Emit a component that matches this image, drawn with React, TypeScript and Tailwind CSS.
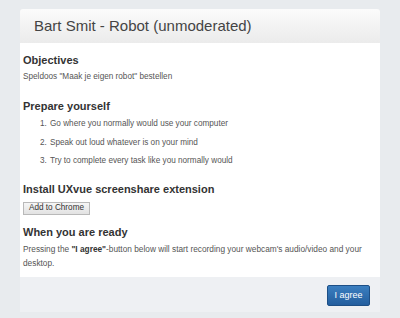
import React from "react";

const steps = [
  "Go where you normally would use your computer",
  "Speak out loud whatever is on your mind",
  "Try to complete every task like you normally would",
];

export default function App() {
  return (
    <div className="h-[318px] w-[400px] overflow-hidden bg-[#e8ebee] pt-[9px] font-['Liberation_Sans',Arial,sans-serif]">
      <div className="mx-[20px] flex h-[303px] flex-col overflow-hidden rounded-t-[3px]">
        {/* header */}
        <div className="flex h-[34px] shrink-0 items-center bg-gradient-to-b from-[#fbfbfb] to-[#ebebeb] pl-[14px]">
          <h1 className="text-[15px] font-light text-[#444]">Bart Smit - Robot (unmoderated)</h1>
        </div>

        {/* body */}
        <div className="h-[234px] shrink-0 overflow-hidden bg-white pl-[3px] pt-[9px] text-[#555]">
          <h2 className="text-[11px] leading-[16px] font-bold text-[#333]">Objectives</h2>
          <p className="mt-[3px] text-[8.2px] leading-[12px]">Speldoos "Maak je eigen robot" bestellen</p>

          <h2 className="mt-[15px] text-[11px] leading-[16px] font-bold text-[#333]">Prepare yourself</h2>
          <ol className="pl-[17px] pt-[1px]">
            {steps.map((s, i) => (
              <li key={i} className="flex text-[8.2px] leading-[18.5px]">
                <span className="w-[10px]">{i + 1}.</span>
                <span>{s}</span>
              </li>
            ))}
          </ol>

          <h2 className="mt-[10.5px] text-[11px] leading-[16px] font-bold text-[#333]">Install UXvue screenshare extension</h2>
          <button className="mt-[5px] flex h-[13px] w-[67px] items-center justify-center border border-[#b9b9b9] bg-gradient-to-b from-[#f6f6f6] to-[#e2e2e2] text-[8.2px] text-[#333]">
            Add to Chrome
          </button>

          <h2 className="mt-[9px] text-[11px] leading-[16px] font-bold text-[#333]">When you are ready</h2>
          <p className="mt-[2px] pr-[8px] text-[8.3px] leading-[14px]">
            Pressing the <b className="text-[#333]">"I agree"</b>-button below will start recording your webcam's audio/video and your desktop.
          </p>
        </div>

        {/* footer */}
        <div className="flex h-[35px] shrink-0 items-start justify-end bg-[#eef0f3] pr-[10px] pt-[8px]">
          <button className="h-[21px] w-[43px] rounded-[2px] border border-[#1d4f86] bg-gradient-to-b from-[#3b7fc0] to-[#235e9e] text-[9px] text-white">
            I agree
          </button>
        </div>
      </div>
    </div>
  );
}
